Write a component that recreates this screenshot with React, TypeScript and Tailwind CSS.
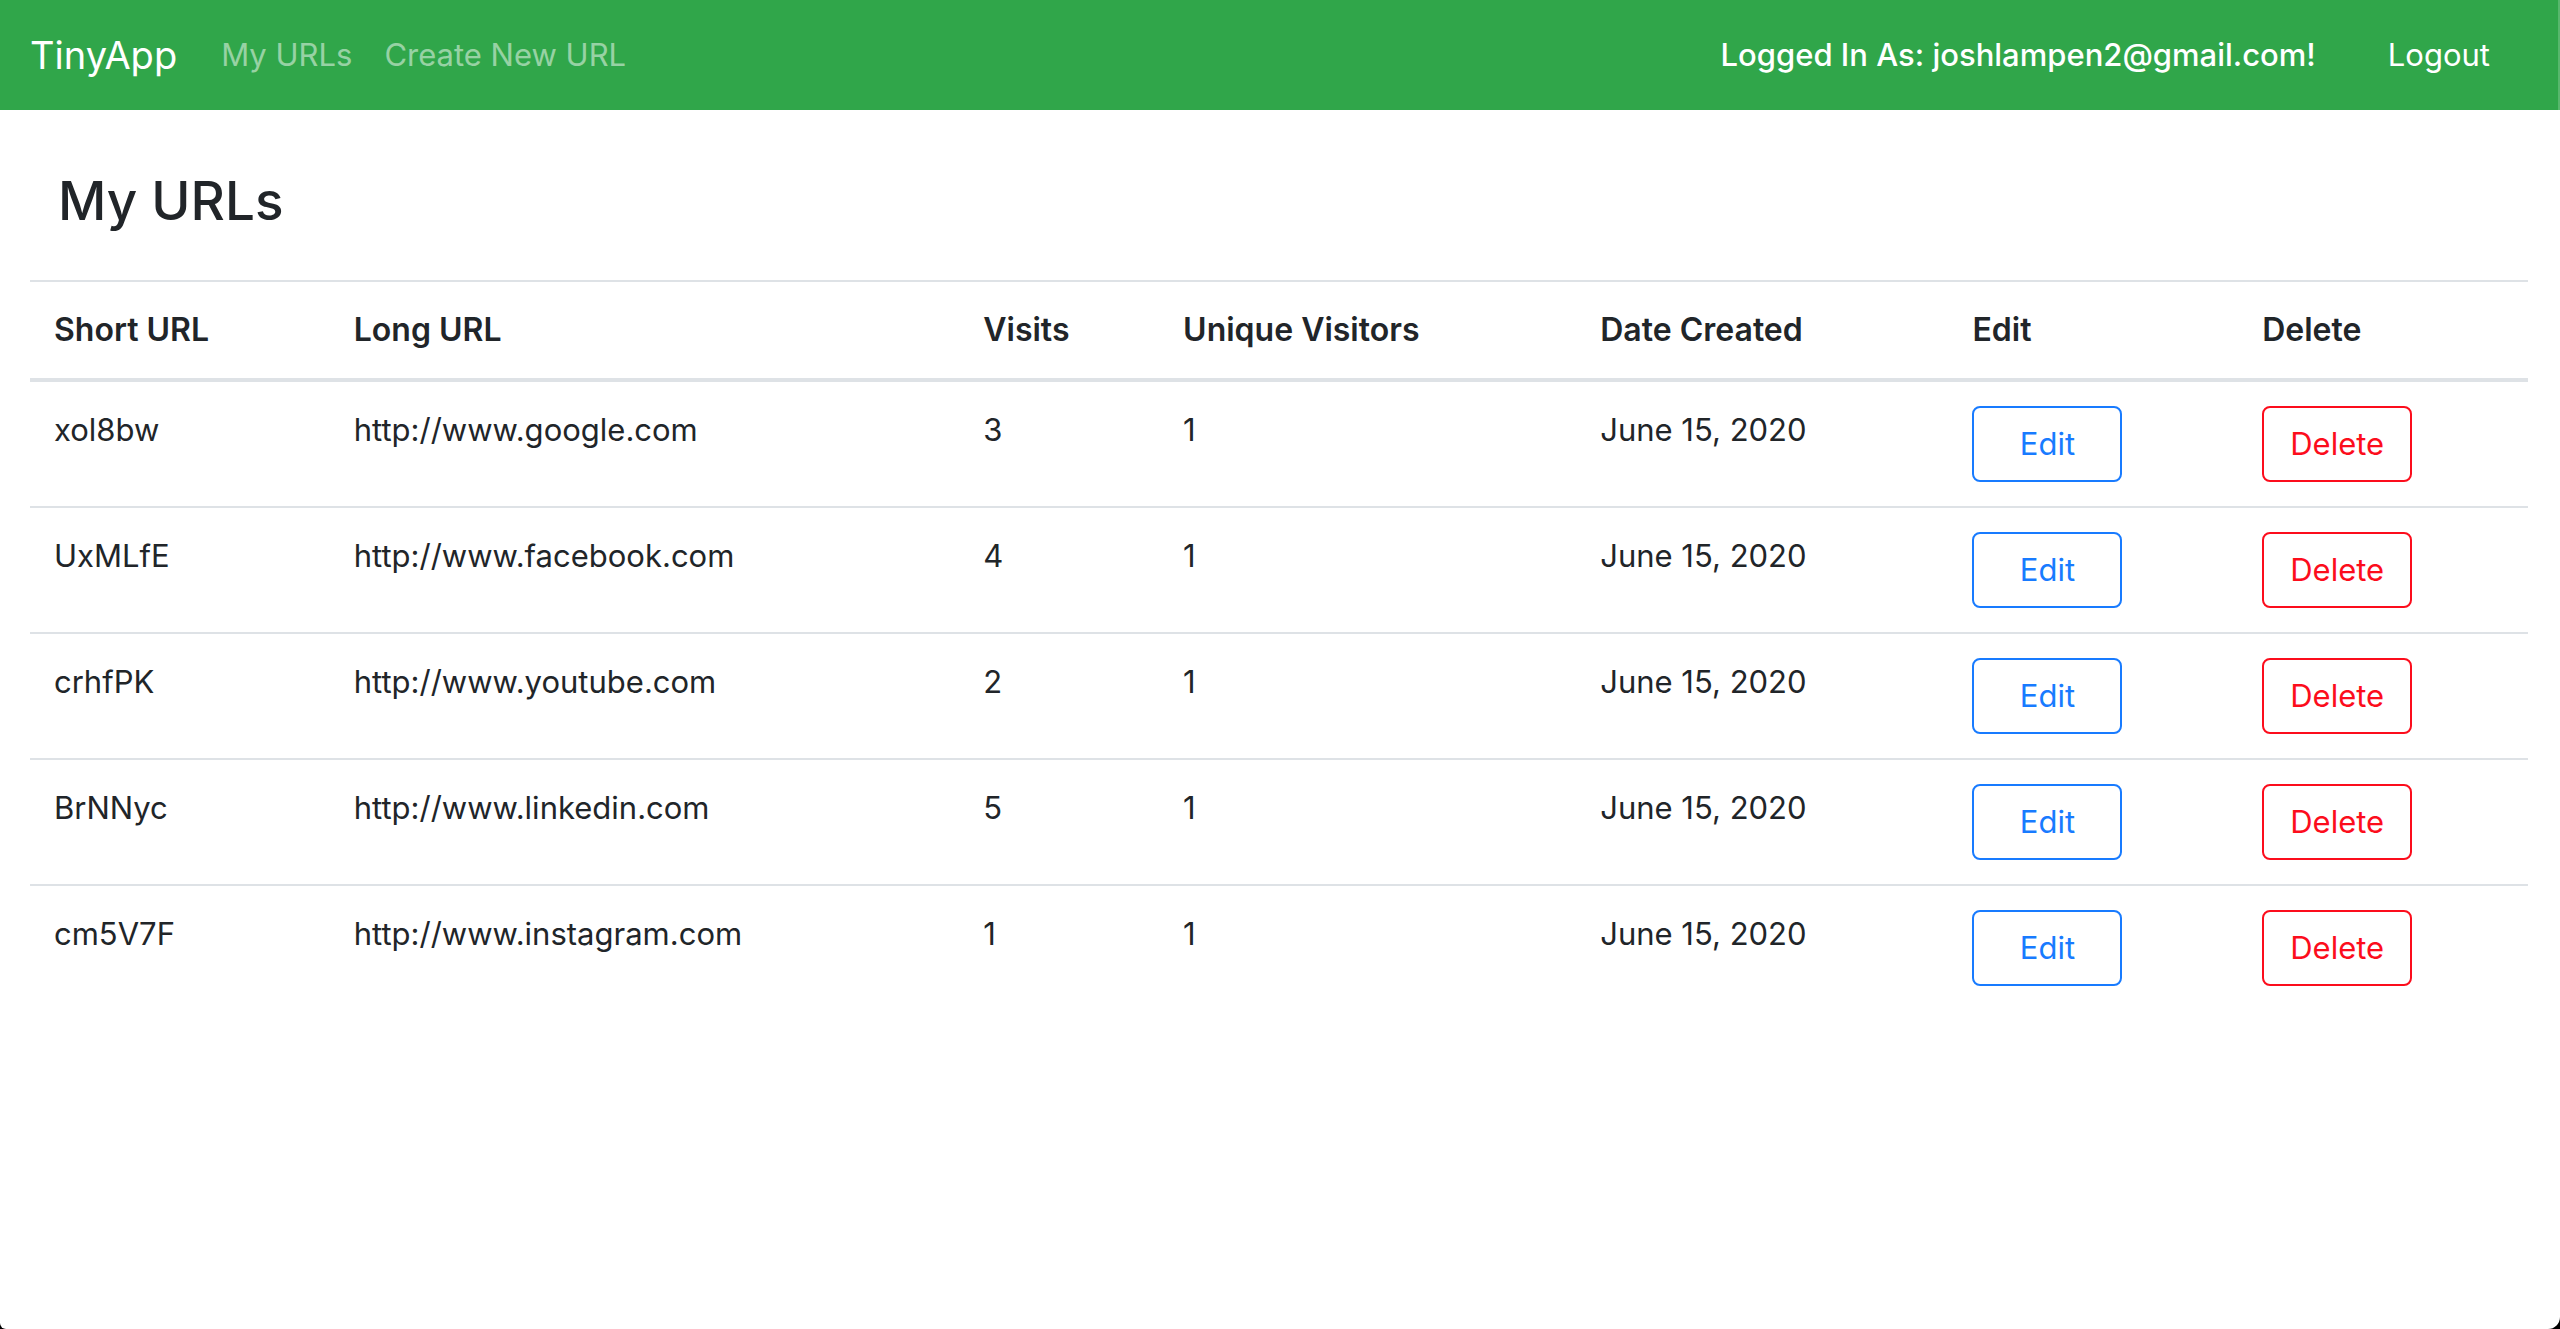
const urls = [
  { short: 'xol8bw', long: 'http://www.google.com', visits: 3 },
  { short: 'UxMLfE', long: 'http://www.facebook.com', visits: 4 },
  { short: 'crhfPK', long: 'http://www.youtube.com', visits: 2 },
  { short: 'BrNNyc', long: 'http://www.linkedin.com', visits: 5 },
  { short: 'cm5V7F', long: 'http://www.instagram.com', visits: 1 },
];

const columns = [
  { label: 'Short URL', width: 'w-[12%]' },
  { label: 'Long URL', width: 'w-[25.2%]' },
  { label: 'Visits', width: 'w-[8%]' },
  { label: 'Unique Visitors', width: 'w-[16.7%]' },
  { label: 'Date Created', width: 'w-[14.9%]' },
  { label: 'Edit', width: 'w-[11.6%]' },
  { label: 'Delete', width: 'w-[11.6%]' },
];

const button = 'block h-[76px] w-[150px] rounded-lg border-2';

export default function App() {
  return (
    <div className="bg-black">
      <div className="min-h-screen overflow-hidden rounded-br-[12px] rounded-bl-[6px] bg-white font-[Inter,sans-serif] text-[31px] leading-[48px] text-[#212529]">
        <nav className="flex items-center border-r-2 border-[#58b76d] bg-[#30a64a] py-[15px] pr-7 pl-[30px]">
          <a href="#" className="mr-11 text-[38px] leading-[80px] text-white">TinyApp</a>
          <div className="flex gap-8 text-white/50">
            <a href="#urls">My URLs</a>
            <a href="#new">Create New URL</a>
          </div>
          <div className="ml-auto flex items-center gap-12 pr-4 text-white">
            <span className="font-medium">Logged In As: joshlampen2@gmail.com!</span>
            <button type="button" className="px-6">Logout</button>
          </div>
        </nav>
        <main className="pr-8 pl-[30px]">
          <h3 className="px-7 pt-14 pb-11 text-[53px] leading-[70px] font-medium">My URLs</h3>
          <table className="w-full table-fixed border-separate border-spacing-0 text-left">
            <thead>
              <tr className="text-[32px]">
                {columns.map((c) => (
                  <th key={c.label} className={`${c.width} border-t-2 border-b-4 border-[#dee2e6] p-6 font-semibold`}>{c.label}</th>
                ))}
              </tr>
            </thead>
            <tbody className="[&>tr+tr>td]:border-t-2 [&>tr+tr>td]:border-[#dee2e6]">
              {urls.map((u) => (
                <tr key={u.short} className="align-top">
                  <td className="p-6">{u.short}</td>
                  <td className="p-6">{u.long}</td>
                  <td className="p-6">{u.visits}</td>
                  <td className="p-6">1</td>
                  <td className="p-6">June 15, 2020</td>
                  <td className="p-6">
                    <button type="button" className={`${button} border-[#187bff] text-[#187bff]`}>Edit</button>
                  </td>
                  <td className="p-6">
                    <button type="button" className={`${button} border-[#fc0d1c] text-[#fc0d1c]`}>Delete</button>
                  </td>
                </tr>
              ))}
            </tbody>
          </table>
        </main>
      </div>
    </div>
  );
}
